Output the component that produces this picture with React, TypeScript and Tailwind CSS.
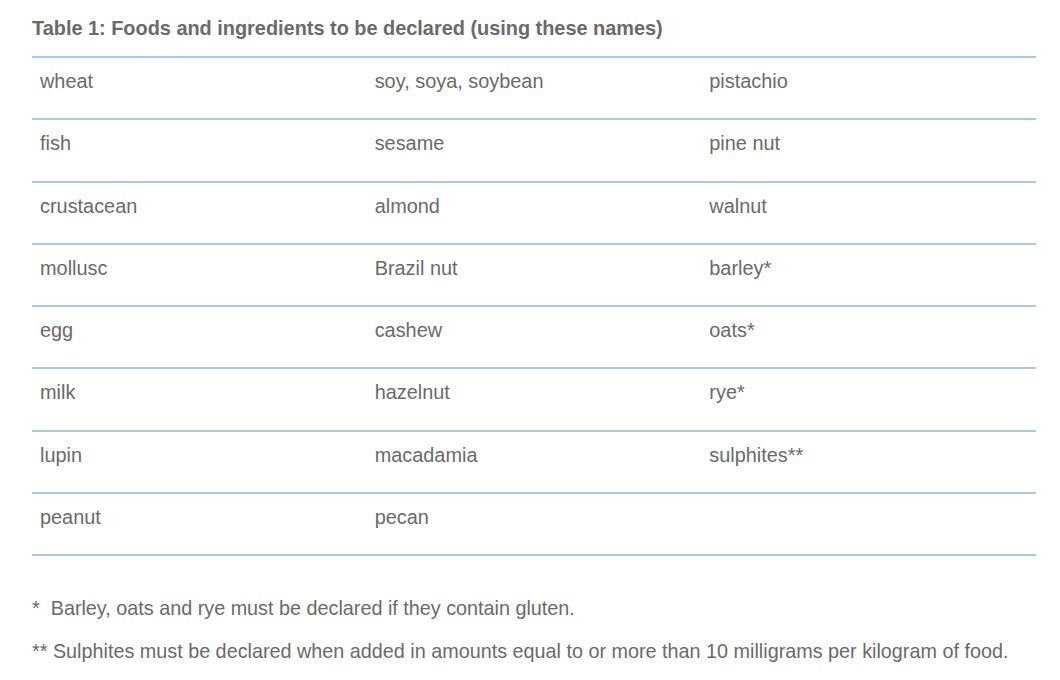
const rows: string[][] = [
  ['wheat', 'soy, soya, soybean', 'pistachio'],
  ['fish', 'sesame', 'pine nut'],
  ['crustacean', 'almond', 'walnut'],
  ['mollusc', 'Brazil nut', 'barley*'],
  ['egg', 'cashew', 'oats*'],
  ['milk', 'hazelnut', 'rye*'],
  ['lupin', 'macadamia', 'sulphites**'],
  ['peanut', 'pecan', ''],
];

export default function App() {
  return (
    <div className="w-[1060px] h-[680px] bg-white px-8 pt-[16px] text-[#6a6a6a] font-['Liberation_Sans',Arial,sans-serif]">
      <h2 className="text-[19.9px] font-bold leading-[24px]">
        Table 1: Foods and ingredients to be declared (using these names)
      </h2>

      <table className="mt-[16px] w-[1004px] border-collapse table-fixed">
        <tbody>
          {rows.map((row, i) => (
            <tr key={i} className="border-t-2 border-b-2 border-[#a9c9e3] h-[62.25px]">
              {row.map((cell, j) => (
                <td key={j} className="align-top pl-2 pt-[11px] text-[19.9px] leading-[24px]">
                  {cell}
                </td>
              ))}
            </tr>
          ))}
        </tbody>
      </table>

      <div className="mt-[40px] text-[19.8px] leading-[24px]">
        <p>*&nbsp; Barley, oats and rye must be declared if they contain gluten.</p>
        <p className="mt-[19px]">** Sulphites must be declared when added in amounts equal to or more than 10 milligrams per kilogram of food.</p>
      </div>
    </div>
  );
}
